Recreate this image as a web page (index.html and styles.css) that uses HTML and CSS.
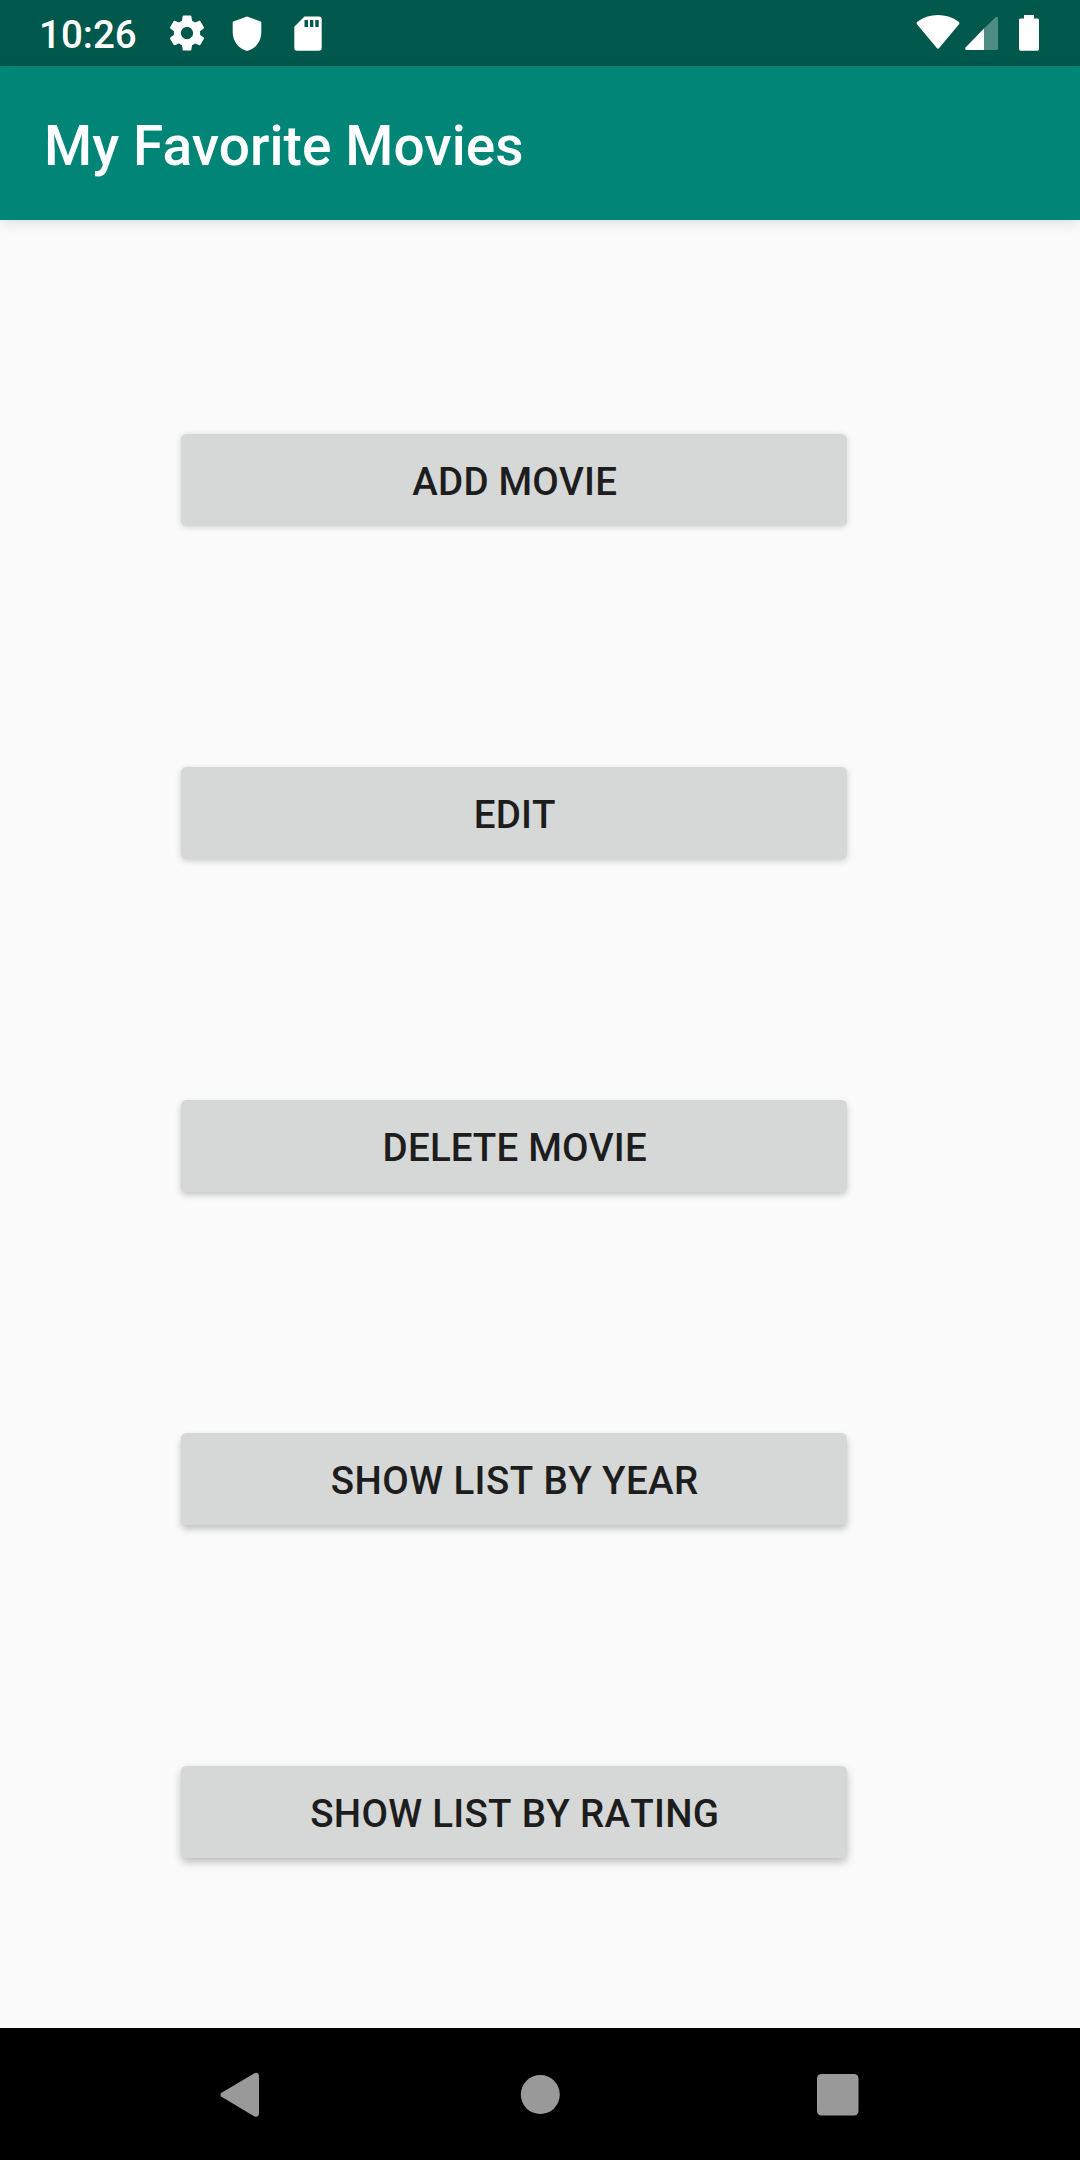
FILE: index.html
```html
<!DOCTYPE html>
<html lang="en">
<head>
<meta charset="utf-8">
<title>My Favorite Movies</title>
<link rel="stylesheet" href="styles.css">
</head>
<body>
<div class="screen">
  <div class="status-bar">
    <span class="clock">10:26</span>
    <svg class="icon gear" width="42" height="42" viewBox="0 0 24 24"><path d="M19.43 12.98c.04-.32.07-.64.07-.98s-.03-.66-.07-.98l2.11-1.65c.19-.15.24-.42.12-.64l-2-3.46c-.12-.22-.39-.3-.61-.22l-2.49 1c-.52-.4-1.08-.73-1.69-.98l-.38-2.65C14.46 2.18 14.25 2 14 2h-4c-.25 0-.46.18-.49.42l-.38 2.65c-.61.25-1.17.59-1.69.98l-2.49-1c-.23-.09-.49 0-.61.22l-2 3.46c-.13.22-.07.49.12.64l2.11 1.65c-.04.32-.07.65-.07.98s.03.66.07.98l-2.11 1.65c-.19.15-.24.42-.12.64l2 3.46c.12.22.39.3.61.22l2.49-1c.52.4 1.08.73 1.69.98l.38 2.65c.03.24.24.42.49.42h4c.25 0 .46-.18.49-.42l.38-2.65c.61-.25 1.17-.59 1.69-.98l2.49 1c.23.09.49 0 .61-.22l2-3.46c.12-.22.07-.49-.12-.64l-2.11-1.65zM12 15.5c-1.93 0-3.5-1.57-3.5-3.5s1.57-3.5 3.500-3.5 3.5 1.57 3.5 3.5-1.57 3.5-3.5 3.5z"/></svg>
    <svg class="icon shield" width="30" height="36" viewBox="0 0 30 36"><path d="M15 .4 29.3 5.8V16C29.3 25 24 32.6 15 35 6 32.6.7 25 .7 16V5.8z"/></svg>
    <svg class="icon sd" width="28" height="36" viewBox="0 0 28 36"><path fill-rule="evenodd" d="M10.500.5H25A2.800 2.800 0 0 1 27.700 3.300V32A2.800 2.800 0 0 1 25 34.800H3A2.800 2.800 0 0 1 .3 32V10.700zM10.500 4v7h3.500V4zM16 4v7h3.300V4zM21.300 4v7h3.400V4z"/></svg>
    <span class="spacer"></span>
    <svg class="icon wifi" width="44" height="36" viewBox="0 0 44 36"><path d="M1.200 9.500Q-.2 7.700 1.700 6.400C14-2.100 30-2.100 42.300 6.400Q44.200 7.700 42.800 9.500L23.400 32.800Q22 34.500 20.600 32.800z"/></svg>
    <svg class="icon signal" width="34" height="35" viewBox="0 0 34 35"><path d="M20 12.500V34H2.500Q.5 33.500 1.500 31.500z"/><path class="faint" d="M20 12.500 31.500 1.200Q33.500 0 34 2V33Q34 34 33 34H20z"/></svg>
    <svg class="icon battery" width="20" height="36" viewBox="0 0 20 36"><path d="M5 0h10v3.500h3.500Q20 3.500 20 5V34Q20 35.800 18.500 35.800h-17Q0 35.800 0 34V5Q0 3.500 1.500 3.500H5z"/></svg>
  </div>
  <header class="app-bar"><h1 class="title">My Favorite Movies</h1></header>
  <main class="content">
    <button class="action level-1">ADD MOVIE</button>
    <button class="action level-2">EDIT</button>
    <button class="action level-3">DELETE MOVIE</button>
    <button class="action level-4">SHOW LIST BY YEAR</button>
    <button class="action level-5">SHOW LIST BY RATING</button>
  </main>
  <nav class="nav-bar">
    <svg class="back" width="39" height="46" viewBox="0 0 39 46"><path d="M1.500 20.800Q-.8 22.800 1.500 24.800L34.500 44.400Q38.500 45.800 39 42V3.300Q38.500-.4 34.500 1.200z"/></svg>
    <svg class="home" width="40" height="40" viewBox="0 0 40 40"><circle cx="20.300" cy="19.600" r="19.500"/></svg>
    <svg class="recent" width="42" height="42" viewBox="0 0 42 42"><rect width="41.500" height="41.500" rx="4.500"/></svg>
  </nav>
</div>
</body>
</html>
```

FILE: styles.css
```css
body {
  margin: 0;
  font-family: Roboto, sans-serif;
}

.screen {
  display: flex;
  flex-direction: column;
  width: 1080px;
  height: 2160px;
  background: #fafafa;
}

.status-bar {
  display: flex;
  align-items: flex-start;
  flex: none;
  box-sizing: border-box;
  height: 66px;
  padding: 0 41px 0 39px;
  background: #00574b;
  color: #fff;
}

.clock {
  width: 127px;
  padding-top: 2px;
  font-size: 38.5px;
  font-weight: 500;
  line-height: 66px;
}

.icon { fill: #fff; }
.faint { fill: #4f8c83; }
.gear { margin-top: 12px; margin-left: -0.5px; }
.shield { margin-top: 16px; margin-left: 24.5px; }
.sd { margin-top: 16px; margin-left: 32px; }
.spacer { flex: 1; }
.wifi { margin-top: 15px; }
.signal { margin-top: 16px; margin-left: 4px; }
.battery { margin-top: 15px; margin-left: 21px; }

.app-bar {
  display: flex;
  align-items: center;
  flex: none;
  height: 154px;
  padding-left: 44px;
  background: #008577;
  box-shadow: 0 3px 12px rgba(0, 0, 0, 0.11);
}

.title {
  margin: 5px 0 0;
  color: #fff;
  font-size: 55px;
  font-weight: 500;
  letter-spacing: 0.08px;
  line-height: 64px;
}

.content {
  display: flex;
  flex: 1;
  flex-direction: column;
  gap: 241px;
  padding: 214px 0 0 181px;
}

.action {
  flex: none;
  width: 666px;
  height: 92px;
  padding: 2px 0 0 1.5px;
  border: 0;
  border-radius: 5.5px;
  background: #d6d8d7;
  color: #1d1d1d;
  font-family: inherit;
  font-size: 38.5px;
  font-kerning: none;
  font-weight: 500;
  letter-spacing: 0.2px;
}

.level-1 { box-shadow: 0 1px 6px rgba(0, 0, 0, 0.17); }
.level-2 { box-shadow: 0 2px 6px rgba(0, 0, 0, 0.19); }
.level-3 { box-shadow: 0 3px 6px rgba(0, 0, 0, 0.21); }
.level-4 { box-shadow: 0 4px 7px rgba(0, 0, 0, 0.23); letter-spacing: 0.4px; }
.level-5 { box-shadow: 0 4px 8px rgba(0, 0, 0, 0.25); letter-spacing: 0.28px; }

.nav-bar {
  display: flex;
  align-items: center;
  justify-content: space-between;
  flex: none;
  box-sizing: border-box;
  height: 132px;
  padding: 2px 221px 0 220px;
  background: #000;
  fill: #999;
}

.back { margin-right: 4px; }
```
